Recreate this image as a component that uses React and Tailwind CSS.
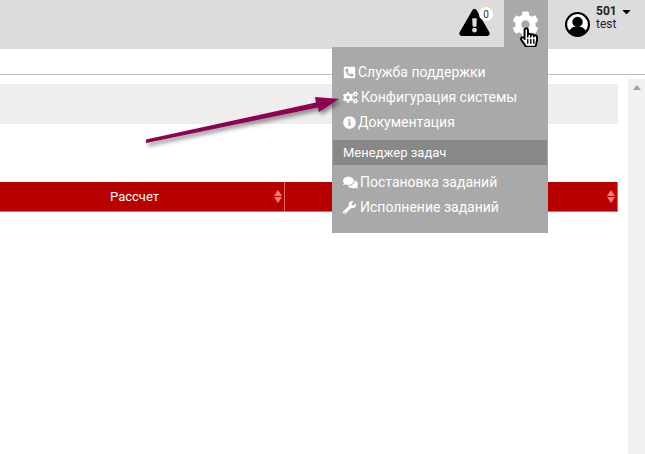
import React from 'react';
import { FaPhoneSquareAlt, FaCogs, FaInfoCircle, FaComments, FaWrench, FaCog, FaExclamationTriangle, FaHandPointer, FaRegHandPointer, FaCaretDown } from 'react-icons/fa';

const MenuItem = ({ icon: Icon, label, gap = 'gap-[2px]', size = 'w-[13px] h-[13px]' }) => (
  <div className={`h-[25px] flex items-center pl-[10px] text-[14px] text-white ${gap}`}>
    <Icon className={`shrink-0 ${size}`} />
    <span>{label}</span>
  </div>
);

const SortArrows = () => (
  <div className="flex flex-col gap-[1px]">
    <div className="w-0 h-0 border-x-[4px] border-x-transparent border-b-[6px] border-b-[#f47c7c]" />
    <div className="w-0 h-0 border-x-[4px] border-x-transparent border-t-[6px] border-t-[#f47c7c]" />
  </div>
);

const App = () => {
  return (
    <div className="relative w-[645px] h-[454px] overflow-hidden bg-white font-['Roboto',sans-serif]">
      {/* Top bar */}
      <div className="h-[49px] bg-[#dcdcdc] flex justify-end">
        <div className="relative w-[45px] flex items-start pt-[9px]">
          <FaExclamationTriangle className="w-[31px] h-[27px] text-black" />
          <span className="absolute left-[20px] top-[7px] w-[14px] h-[14px] rounded-full bg-white flex items-center justify-center text-[10px] text-[#333]">0</span>
        </div>
        <div className="relative w-[44px] bg-[#a9a9a9] flex items-center justify-center">
          <FaCog className="w-[27px] h-[27px] text-white -mt-[1px] -ml-[2px]" />
          <FaHandPointer className="absolute left-[16px] top-[26px] w-[18px] h-[23px] text-white" />
          <FaRegHandPointer className="absolute left-[16px] top-[26px] w-[18px] h-[23px] text-black" />
        </div>
        <div className="w-[97px] flex items-start pl-[17px] pt-[5px] gap-[6px]">
          <svg viewBox="0 0 24 24" className="w-[25px] h-[25px] mt-[7px]">
            <circle cx="12" cy="12" r="11" fill="#fff" stroke="#000" strokeWidth="2" />
            <circle cx="12" cy="9.500" r="5" fill="#000" />
            <path d="M3.500 19c2-4 5-5 8.500-5s6.500 1 8.500 5c-2 2.500-5 4-8.500 4s-6.500-1.500-8.500-4z" fill="#000" />
          </svg>
          <div className="text-[12px] leading-[14px] text-[#222] -mt-[1px]">
            <div className="flex items-center gap-[3px] font-bold">501 <FaCaretDown className="w-[13px] h-[13px] text-black" /></div>
            <div className="-mt-[1px]">test</div>
          </div>
        </div>
      </div>

      <div className="h-[26px] border-b border-[#bdbdbd]" />

      {/* Page body */}
      <div className="flex h-[379px]">
        <div className="w-[618px] pt-[9px]">
          <div className="h-[40px] bg-[#eeeeee]" />
          <div className="mt-[58px] h-[30px] bg-[#b80000] border-b border-[#d96a6a] flex text-white text-[13px]">
            <div className="w-[285px] relative flex items-center justify-end pr-[2px] border-r border-[#e06a6a]">
              <span className="absolute left-[110px]">Рассчет</span>
              <SortArrows />
            </div>
            <div className="flex-1 flex items-center justify-end pr-[2px] border-r border-[#e06a6a]">
              <SortArrows />
            </div>
          </div>
        </div>
        <div className="ml-[10px] mt-[4px] w-[17px] bg-[#f1f1f1] flex justify-center pt-[6px]">
          <div className="w-0 h-0 border-x-[4px] border-x-transparent border-b-[5px] border-b-[#a3a3a3]" />
        </div>
      </div>

      {/* Settings dropdown */}
      <div className="absolute left-[332px] top-[47px] w-[216px] h-[186px] bg-[#a9a9a9] px-[1px] pt-[13px]">
        <MenuItem icon={FaPhoneSquareAlt} label="Служба поддержки" />
        <MenuItem icon={FaCogs} label="Конфигурация системы" gap="gap-[3px]" size="w-[15px] h-[15px]" />
        <MenuItem icon={FaInfoCircle} label="Документация" />
        <div className="mt-[5px] h-[25px] bg-[#888888] flex items-center pl-[10px] text-[13px] text-white">Менеджер задач</div>
        <div className="mt-[5px]">
          <MenuItem icon={FaComments} label="Постановка заданий" gap="gap-[2px]" size="w-[15px] h-[15px]" />
          <MenuItem icon={FaWrench} label="Исполнение заданий" gap="gap-[4px]" />
        </div>
      </div>

      {/* Annotation arrow */}
      <svg className="absolute inset-0 w-[645px] h-[454px] pointer-events-none drop-shadow-[2px_3px_2px_rgba(0,0,0,0.45)]" viewBox="0 0 645 454">
        <path d="M146 139.500 L146 143 L318 107.500 L319 112 L339 99 L315 97 L316 102.500 Z" fill="#8e0052" />
      </svg>
    </div>
  );
};

export default App;
